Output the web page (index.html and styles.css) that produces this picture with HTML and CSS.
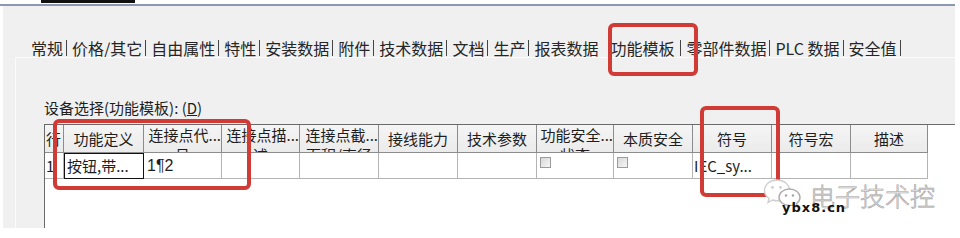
FILE: index.html
```html
<!DOCTYPE html>
<html lang="zh">
<head>
<meta charset="utf-8">
<title>功能模板</title>
<link rel="stylesheet" href="styles.css">
</head>
<body>
<div class="top"><div class="blackbar"></div></div>
<div class="blueline"></div>
<div class="panel">
  <div class="tabs">
    <span class="tab first">常规</span><span class="sep"></span>
    <span class="tab">价格/其它</span><span class="sep"></span>
    <span class="tab">自由属性</span><span class="sep"></span>
    <span class="tab">特性</span><span class="sep"></span>
    <span class="tab">安装数据</span><span class="sep"></span>
    <span class="tab">附件</span><span class="sep"></span>
    <span class="tab">技术数据</span><span class="sep"></span>
    <span class="tab">文档</span><span class="sep"></span>
    <span class="tab">生产</span><span class="sep"></span>
    <span class="tab pre">报表数据</span>
    <span class="tab sel">功能模板</span><span class="sep"></span>
    <span class="tab">零部件数据</span><span class="sep"></span>
    <span class="tab">PLC 数据</span><span class="sep"></span>
    <span class="tab">安全值</span><span class="sep"></span>
  </div>
  <div class="page">
    <div class="label">设备选择(功能模板): (<u>D</u>)</div>
    <div class="grid">
      <div class="row head">
        <div class="cell rh">行</div>
        <div class="cell">功能定义</div>
        <div class="cell wrap"><div class="l1">连接点代...</div><div class="l2">号</div></div>
        <div class="cell wrap"><div class="l1">连接点描...</div><div class="l2">述</div></div>
        <div class="cell wrap"><div class="l1">连接点截...</div><div class="l2">面积/直径</div></div>
        <div class="cell">接线能力</div>
        <div class="cell">技术参数</div>
        <div class="cell wrap"><div class="l1">功能安全...</div><div class="l2">状态</div></div>
        <div class="cell">本质安全</div>
        <div class="cell">符号</div>
        <div class="cell">符号宏</div>
        <div class="cell">描述</div>
      </div>
      <div class="row data">
        <div class="cell rh">1</div>
        <div class="cell selcell">按钮,带...</div>
        <div class="cell latin">1¶2</div>
        <div class="cell"></div>
        <div class="cell"></div>
        <div class="cell"></div>
        <div class="cell"></div>
        <div class="cell chk"><span class="cb"></span></div>
        <div class="cell chk"><span class="cb"></span></div>
        <div class="cell tight">IEC_sy...</div>
        <div class="cell"></div>
        <div class="cell"></div>
      </div>
    </div>
  </div>
</div>

<div class="redbox rb1"></div>
<div class="redbox rb2"></div>
<div class="redbox rb3"></div>

<svg class="wm-icon" width="40" height="32" viewBox="0 0 40 32">
  <path d="M15 3 C8 3 2.5 7.5 2.5 13.5 C2.5 17 4.3 19.6 7 21.5 L6 25.5 L10.5 23 C12 23.5 13.5 23.8 15 23.8 C22 23.8 27.5 19.3 27.5 13.5 C27.5 7.5 22 3 15 3 Z" fill="#fff" stroke="#cfcfcf" stroke-width="1.4"/>
  <circle cx="10.5" cy="10.5" r="1.4" fill="#d0d0d0"/>
  <circle cx="18.5" cy="10.5" r="1.4" fill="#d0d0d0"/>
  <path d="M27.5 12 C33.5 12 38 16 38 20.5 C38 23 36.7 25 34.6 26.5 L35.3 29.8 L31.8 27.8 C30.5 28.2 29 28.5 27.5 28.5 C21.5 28.5 17 24.8 17 20.2 C17 15.8 21.5 12 27.5 12 Z" fill="#fff" stroke="#acacac" stroke-width="1.4"/>
  <circle cx="24" cy="18.5" r="1.2" fill="#a4a4a4"/>
  <circle cx="31" cy="18.5" r="1.2" fill="#a4a4a4"/>
</svg>
<div class="wm-text">电子技术控</div>
<div class="wm-url">ybx8.cn</div>
</body>
</html>
```

FILE: styles.css
```css
body {
  margin: 0;
  width: 960px;
  height: 238px;
  overflow: hidden;
  position: relative;
  background: #ffffff;
  color: #1e1e1e;
  font-family: "Noto Sans CJK SC", "Noto Sans", sans-serif;
}

.top {
  height: 4px;
}

.blackbar {
  margin-left: 41px;
  width: 94px;
  height: 3px;
  background: #111111;
}

.blueline {
  width: 955px;
  height: 2px;
  background: #8b97b5;
}

.panel {
  margin-left: 3px;
  width: 952px;
  height: 222px;
  box-sizing: border-box;
  padding-top: 32px;
  background: #f0f0f0;
  display: flex;
  flex-direction: column;
}

.tabs {
  display: flex;
  align-items: center;
  height: 20px;
  padding-left: 28px;
  font-size: 16px;
  line-height: 20px;
  color: #262626;
}

.tab {
  padding: 0 3px 0 5px;
  white-space: nowrap;
}

.tab.first {
  padding-left: 0;
}

.tab.pre {
  padding-right: 0;
}

.tab.sel {
  padding: 0 6px 0 12px;
}

.sep {
  width: 1px;
  height: 16px;
  background: #444444;
}

.page {
  flex: 1;
  min-height: 0;
  margin: -1px 0 0 12px;
  border-top: 1px solid #fbfbfb;
  border-left: 1px solid #fbfbfb;
  padding: 40px 0 0 28px;
  display: flex;
  flex-direction: column;
}

.label {
  font-size: 15px;
  line-height: 20px;
  margin-bottom: 6px;
  white-space: nowrap;
}

.grid {
  flex: 1;
  background: #ffffff;
  border-top: 1px solid #6a6a6a;
  border-left: 1px solid #6a6a6a;
}

.row {
  display: grid;
  grid-template-columns: 19px 80px 78px 78px 79px 79px 79px 77px 79px 79px 79px 77px;
}

.cell {
  box-sizing: border-box;
  overflow: hidden;
  white-space: nowrap;
  font-size: 15px;
}

.head .cell {
  height: 28px;
  padding-top: 4px;
  line-height: 20px;
  text-align: center;
  background: linear-gradient(#f5f5f5, #ebebeb);
  border-right: 1px solid #8c8c8c;
  border-bottom: 1px solid #8c8c8c;
}

.head .cell.wrap {
  padding-top: 0;
}

.head .cell.wrap .l1 {
  text-align: right;
}

.head .cell.wrap .l2 {
  text-align: center;
}

.head .cell.rh,
.data .cell.rh {
  text-align: left;
  padding-left: 1px;
}

.data .cell {
  height: 26px;
  line-height: 25px;
  padding-left: 3px;
  border-right: 1px solid #b4b4b4;
  border-bottom: 1px solid #b4b4b4;
}

.data .cell.selcell {
  outline: 1px solid #111111;
  outline-offset: -1px;
}

.data .cell.latin {
  font-family: "Liberation Sans", sans-serif;
  font-size: 16px;
}

.data .cell.tight {
  padding-left: 1px;
}

.data .cell.chk {
  padding-left: 3px;
}

.cb {
  display: block;
  width: 11px;
  height: 11px;
  box-sizing: border-box;
  margin-top: 4px;
  border: 1px solid #9c9c9c;
  background: linear-gradient(135deg, #d8d8d8, #f7f7f7);
}

.redbox {
  position: absolute;
  box-sizing: border-box;
  border: 4px solid #d13b36;
  border-radius: 6px;
}

.rb1 {
  left: 608px;
  top: 23px;
  width: 90px;
  height: 53px;
}

.rb2 {
  left: 53px;
  top: 119px;
  width: 198px;
  height: 71px;
}

.rb3 {
  left: 700px;
  top: 106px;
  width: 80px;
  height: 91px;
}

.wm-icon {
  position: absolute;
  left: 762px;
  top: 177px;
}

.wm-text {
  position: absolute;
  left: 810px;
  top: 178px;
  font-size: 25px;
  line-height: 34px;
  font-weight: 300;
  color: #ededed;
  -webkit-text-stroke: 0.6px #a0a0a0;
  white-space: nowrap;
}

.wm-url {
  position: absolute;
  left: 782px;
  top: 200px;
  font-family: "DejaVu Sans", sans-serif;
  font-weight: bold;
  font-size: 13px;
  line-height: 16px;
  letter-spacing: 1px;
  color: #111111;
}
```
